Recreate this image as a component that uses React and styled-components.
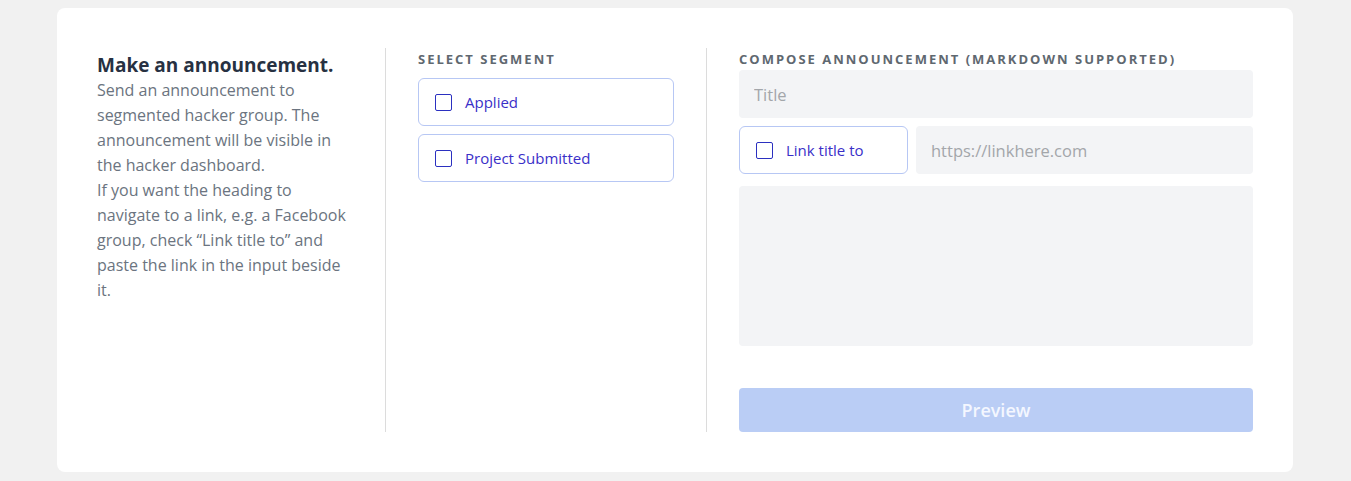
import React from 'react';
import styled, { createGlobalStyle } from 'styled-components';

const GlobalStyle = createGlobalStyle`
  html, body {
    margin: 0;
    background: #f1f1f1;
  }
  body {
    padding: 8px 0 0;
    font-family: 'Open Sans', 'Liberation Sans', sans-serif;
  }
`;

const Card = styled.div`
  width: 1236px;
  margin: 0 0 0 57px;
  box-sizing: border-box;
  background: #fff;
  border-radius: 8px;
  padding: 40px;
  display: flex;
`;

const Column = styled.section`
  box-sizing: border-box;
  display: flex;
  flex-direction: column;
  width: ${p => p.width || 'auto'};
  flex: ${p => (p.grow ? 1 : 'none')};
  padding: 0 ${p => (p.last ? 0 : '32px')} 0 ${p => (p.first ? 0 : '32px')};
  border-right: ${p => (p.last ? 'none' : '1px solid #dcdcdc')};
  min-height: 384px;
`;

const Heading = styled.h2`
  margin: 4px 0 0;
  font-size: 19px;
  line-height: 26px;
  font-weight: 700;
  color: #273142;
`;

const Body = styled.p`
  margin: 0;
  font-size: 16px;
  line-height: 25px;
  color: #6b7480;
`;

const Label = styled.div`
  font-family: 'Open Sans', 'Liberation Sans', sans-serif;
  font-size: 13px;
  line-height: 22px;
  font-weight: 700;
  letter-spacing: 2px;
  text-transform: uppercase;
  color: #5f6870;
  margin-bottom: ${p => p.gap || 0}px;
`;

const Stack = styled.div`
  display: flex;
  flex-direction: column;
  gap: 8px;
`;

const CheckCard = styled.label`
  box-sizing: border-box;
  display: flex;
  align-items: center;
  gap: 13px;
  height: 48px;
  padding: 0 16px;
  width: ${p => p.width || 'auto'};
  flex: none;
  border: 1px solid #b7c7f4;
  border-radius: 6px;
  background: #fff;
  color: #3a2fc8;
  font-size: 15px;
  cursor: pointer;
`;

const Box = styled.span`
  box-sizing: border-box;
  width: 17px;
  height: 17px;
  border: 1.5px solid #2b30c0;
  border-radius: 2px;
  flex: none;
`;

const Field = styled.input`
  box-sizing: border-box;
  height: 48px;
  width: 100%;
  min-width: 0;
  border: none;
  border-radius: 4px;
  background: #f3f4f6;
  padding: 0 15px;
  font-family: inherit;
  font-size: 16.5px;
  color: #333;
  outline: none;
  &::placeholder {
    color: #a3a6aa;
  }
`;

const Row = styled.div`
  display: flex;
  gap: 8px;
  margin-top: 8px;
`;

const TextArea = styled.textarea`
  box-sizing: border-box;
  margin-top: 12px;
  height: 160px;
  width: 100%;
  resize: none;
  border: none;
  border-radius: 4px;
  background: #f3f4f6;
  outline: none;
  font-family: inherit;
`;

const PreviewButton = styled.button`
  margin-top: auto;
  height: 44px;
  width: 100%;
  border: none;
  border-radius: 4px;
  background: #bacdf5;
  color: #f4f7ff;
  font-family: inherit;
  font-size: 18px;
  font-weight: 600;
`;

const Check = ({ children, width }) => (
  <CheckCard width={width}>
    <Box />
    {children}
  </CheckCard>
);

export default function App() {
  return (
    <>
      <GlobalStyle />
      <Card>
        <Column first width="289px">
          <Heading>Make an announcement.</Heading>
          <Body>
            Send an announcement to segmented hacker group. The announcement will be visible in
            the hacker dashboard.
            <br />
            If you want the heading to navigate to a link, e.g. a Facebook group, check “Link
            title to” and paste the link in the input beside it.
          </Body>
        </Column>
        <Column width="321px">
          <Label gap={8}>Select Segment</Label>
          <Stack>
            <Check>Applied</Check>
            <Check>Project Submitted</Check>
          </Stack>
        </Column>
        <Column last grow>
          <Label>Compose Announcement (Markdown Supported)</Label>
          <Field placeholder="Title" />
          <Row>
            <Check width="169px">Link title to</Check>
            <Field placeholder="https://linkhere.com" />
          </Row>
          <TextArea />
          <PreviewButton>Preview</PreviewButton>
        </Column>
      </Card>
    </>
  );
}
